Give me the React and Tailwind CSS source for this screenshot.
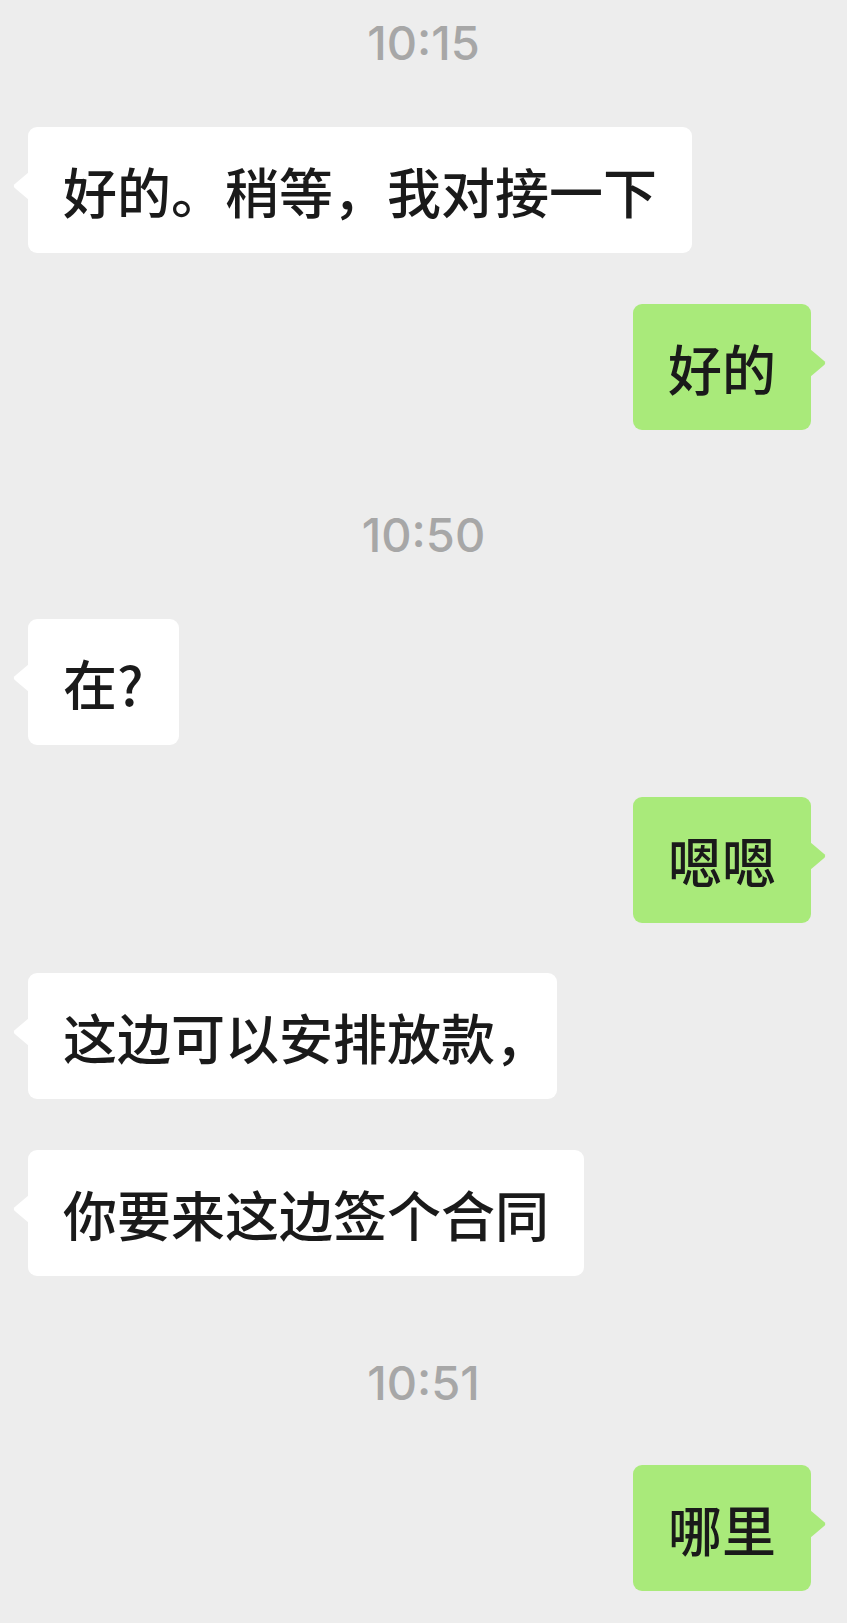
import React from 'react';

const cjk = { fontFamily: '"Noto Sans CJK SC", "Noto Sans", sans-serif' };

const Time = ({ text, className }) => (
    <div className={`flex justify-center ${className}`}>
        <span className="text-[47px] leading-none font-medium text-[#a7a7a7] font-['Inter',sans-serif]">{text}</span>
    </div>
);

const LeftTail = () => (
    <svg className="absolute left-[-15px] top-[45px]" width="16" height="28" viewBox="0 0 16 28">
        <path d="M16 0 L1.5 12.2 Q0 14 1.5 15.8 L16 28 Z" fill="#ffffff" />
    </svg>
);

const RightTail = () => (
    <svg className="absolute right-[-15px] top-[45px]" width="16" height="28" viewBox="0 0 16 28">
        <path d="M0 0 L14.5 12.2 Q16 14 14.5 15.8 L0 28 Z" fill="#a9ea7a" />
    </svg>
);

const Bubble = ({ side, children, className }) => {
    const mine = side === 'right';
    return (
        <div className={`flex ${mine ? 'justify-end pr-[36px]' : 'justify-start pl-[28px]'} ${className}`}>
            <div
                className={`relative h-[126px] flex items-center px-[35px] rounded-[9px] text-[54px] font-medium text-[#1a1a1a] whitespace-nowrap ${mine ? 'bg-[#a9ea7a]' : 'bg-white'}`}
                style={cjk}
            >
                {mine ? <RightTail /> : <LeftTail />}
                {children}
            </div>
        </div>
    );
};

export default function App() {
    return (
        <div className="min-h-screen w-full bg-[#ededed] pt-[19px] pb-[32px] flex flex-col">
            <Time text="10:15" />
            <Bubble side="left" className="mt-[61px]">好的。稍等，我对接一下</Bubble>
            <Bubble side="right" className="mt-[51px]">好的</Bubble>
            <Time text="10:50" className="mt-[81px]" />
            <Bubble side="left" className="mt-[61px]">在?</Bubble>
            <Bubble side="right" className="mt-[52px]">嗯嗯</Bubble>
            <Bubble side="left" className="mt-[50px]">
                这边可以安排放款<span className="tracking-[-27px]">，</span>
            </Bubble>
            <Bubble side="left" className="mt-[51px]">你要来这边签个合同</Bubble>
            <Time text="10:51" className="mt-[83px]" />
            <Bubble side="right" className="mt-[59px]">哪里</Bubble>
        </div>
    );
}
